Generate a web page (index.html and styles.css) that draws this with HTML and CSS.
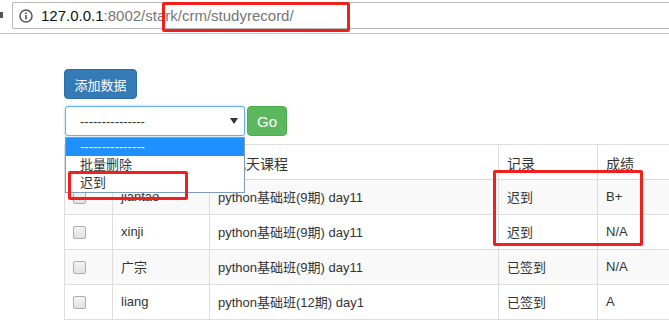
FILE: index.html
```html
<!DOCTYPE html>
<html lang="zh-CN">
<head>
<meta charset="utf-8">
<title>studyrecord</title>
<link rel="stylesheet" href="styles.css">
</head>
<body>
<header class="toolbar">
  <span class="edge-icon"></span>
  <div class="omnibox">
    <svg class="info" width="14" height="14" viewBox="0 0 14 14" aria-hidden="true">
      <circle cx="7" cy="7" r="6" fill="none" stroke="#555" stroke-width="1.5"/>
      <rect x="6.2" y="6" width="1.6" height="4.4" fill="#555"/>
      <rect x="6.2" y="3.4" width="1.6" height="1.6" fill="#555"/>
    </svg>
    <span class="url"><span class="host">127.0.0.1</span>:8002/stark/crm/studyrecord/</span>
  </div>
</header>

<main class="page">
  <button class="btn btn-primary" type="button">添加数据</button>

  <div class="actions">
    <div class="select">
      <span class="select-value">---------------</span>
      <svg class="caret" width="8" height="6" viewBox="0 0 8 6" aria-hidden="true"><path d="M0 0 H8 L4 6 Z" fill="#333"/></svg>
    </div>
    <button class="btn btn-success" type="button">Go</button>
    <ul class="options">
      <li class="option selected">---------------</li>
      <li class="option">批量删除</li>
      <li class="option">迟到</li>
    </ul>
  </div>

  <table class="records">
    <colgroup>
      <col class="c-check"><col class="c-name"><col class="c-course"><col class="c-record"><col class="c-score">
    </colgroup>
    <thead>
      <tr><th></th><th></th><th>第几天课程</th><th>记录</th><th>成绩</th></tr>
    </thead>
    <tbody>
      <tr class="odd"><td><span class="check"></span></td><td>jiantao</td><td>python基础班(9期) day11</td><td>迟到</td><td>B+</td></tr>
      <tr><td><span class="check"></span></td><td>xinji</td><td>python基础班(9期) day11</td><td>迟到</td><td>N/A</td></tr>
      <tr class="odd"><td><span class="check"></span></td><td>广宗</td><td>python基础班(9期) day11</td><td>已签到</td><td>N/A</td></tr>
      <tr><td><span class="check"></span></td><td>liang</td><td>python基础班(12期) day1</td><td>已签到</td><td>A</td></tr>
    </tbody>
  </table>
</main>

<div class="mark mark-url"></div>
<div class="mark mark-option"></div>
<div class="mark mark-cells"></div>
</body>
</html>
```

FILE: styles.css
```css
html, body {
  margin: 0;
  padding: 0;
  background: #fff;
  overflow: hidden;
}

body {
  font-family: "Liberation Sans", Arial, "Noto Sans CJK SC", sans-serif;
  font-size: 13px;
  color: #333;
  width: 669px;
  height: 320px;
  position: relative;
}

/* browser chrome */
.toolbar {
  height: 34px;
  border-bottom: 1px solid #c4c4c4;
  display: flex;
  align-items: flex-start;
  padding-top: 2px;
  box-sizing: border-box;
}

.edge-icon {
  width: 3px;
  height: 6px;
  margin-top: 10px;
  background: #555;
  margin-right: 9px;
  flex: none;
}

.omnibox {
  flex: 1;
  height: 27px;
  border: 1px solid #b9b9b9;
  border-right: none;
  border-radius: 2px 0 0 2px;
  box-sizing: border-box;
  display: flex;
  align-items: center;
  padding-left: 6px;
  background: #fff;
}

.info {
  flex: none;
  margin-right: 8px;
}

.url {
  font-size: 15px;
  color: #767676;
  white-space: nowrap;
}

.host {
  color: #111;
}

/* page */
.page {
  padding: 35px 0 0 64px;
}

.btn {
  font-family: inherit;
  font-size: 13px;
  border-radius: 4px;
  color: #fff;
  cursor: pointer;
  box-sizing: border-box;
  height: 30px;
  margin: 0;
  display: block;
}

.btn-primary {
  background: #337ab7;
  border: 1px solid #2e6da4;
  width: 73px;
  padding: 0;
}

.actions {
  position: relative;
  display: flex;
  gap: 2px;
  margin-top: 7px;
  margin-left: 1px;
}

.select {
  width: 180px;
  height: 30px;
  box-sizing: border-box;
  border: 1px solid #66afe9;
  border-radius: 3px;
  box-shadow: 0 0 3px rgba(102, 175, 233, 0.6);
  display: flex;
  align-items: center;
  justify-content: space-between;
  padding: 0 6px 0 14px;
  background: #fff;
  color: #333;
}

.btn-success {
  background: #5cb85c;
  border: 1px solid #4cae4c;
  width: 40px;
  padding: 0;
  font-size: 15px;
}

.options {
  position: absolute;
  left: 0;
  top: 31px;
  width: 180px;
  margin: 0;
  padding: 0;
  list-style: none;
  background: #fff;
  border: 1px solid #7f9db9;
  box-sizing: border-box;
  z-index: 5;
}

.option {
  height: 18px;
  line-height: 18px;
  padding-left: 14px;
  font-size: 13px;
  color: #333;
}

.option.selected {
  background: #1e90ff;
  color: #fff;
}

/* table */
.records {
  margin-top: 8px;
  border-collapse: collapse;
  table-layout: fixed;
  width: 606px;
  border: 1px solid #ddd;
}

.c-check { width: 48px; }
.c-name { width: 97px; }
.c-course { width: 289px; }
.c-record { width: 99px; }
.c-score { width: 73px; }

.records th,
.records td {
  border: 1px solid #ddd;
  height: 35px;
  padding: 0 8px;
  text-align: left;
  vertical-align: middle;
  white-space: nowrap;
  box-sizing: border-box;
}

.records th {
  font-weight: normal;
  font-size: 14px;
  padding-top: 2px;
}

.records td {
  padding-bottom: 1px;
}

.records tr.odd td {
  background: #f9f9f9;
}

.check {
  display: inline-block;
  width: 11px;
  height: 11px;
  border: 1px solid #adadad;
  border-radius: 2px;
  background: linear-gradient(#f3f3f3, #e2e2e2);
  vertical-align: middle;
}

/* annotation marks */
.mark {
  position: absolute;
  border: 3px solid #f0201c;
  border-radius: 2px;
  box-sizing: border-box;
  z-index: 10;
}

.mark-url {
  left: 162px;
  top: 2px;
  width: 188px;
  height: 30px;
}

.mark-option {
  left: 68px;
  top: 171px;
  width: 120px;
  height: 29px;
}

.mark-cells {
  left: 493px;
  top: 170px;
  width: 150px;
  height: 76px;
}
```
